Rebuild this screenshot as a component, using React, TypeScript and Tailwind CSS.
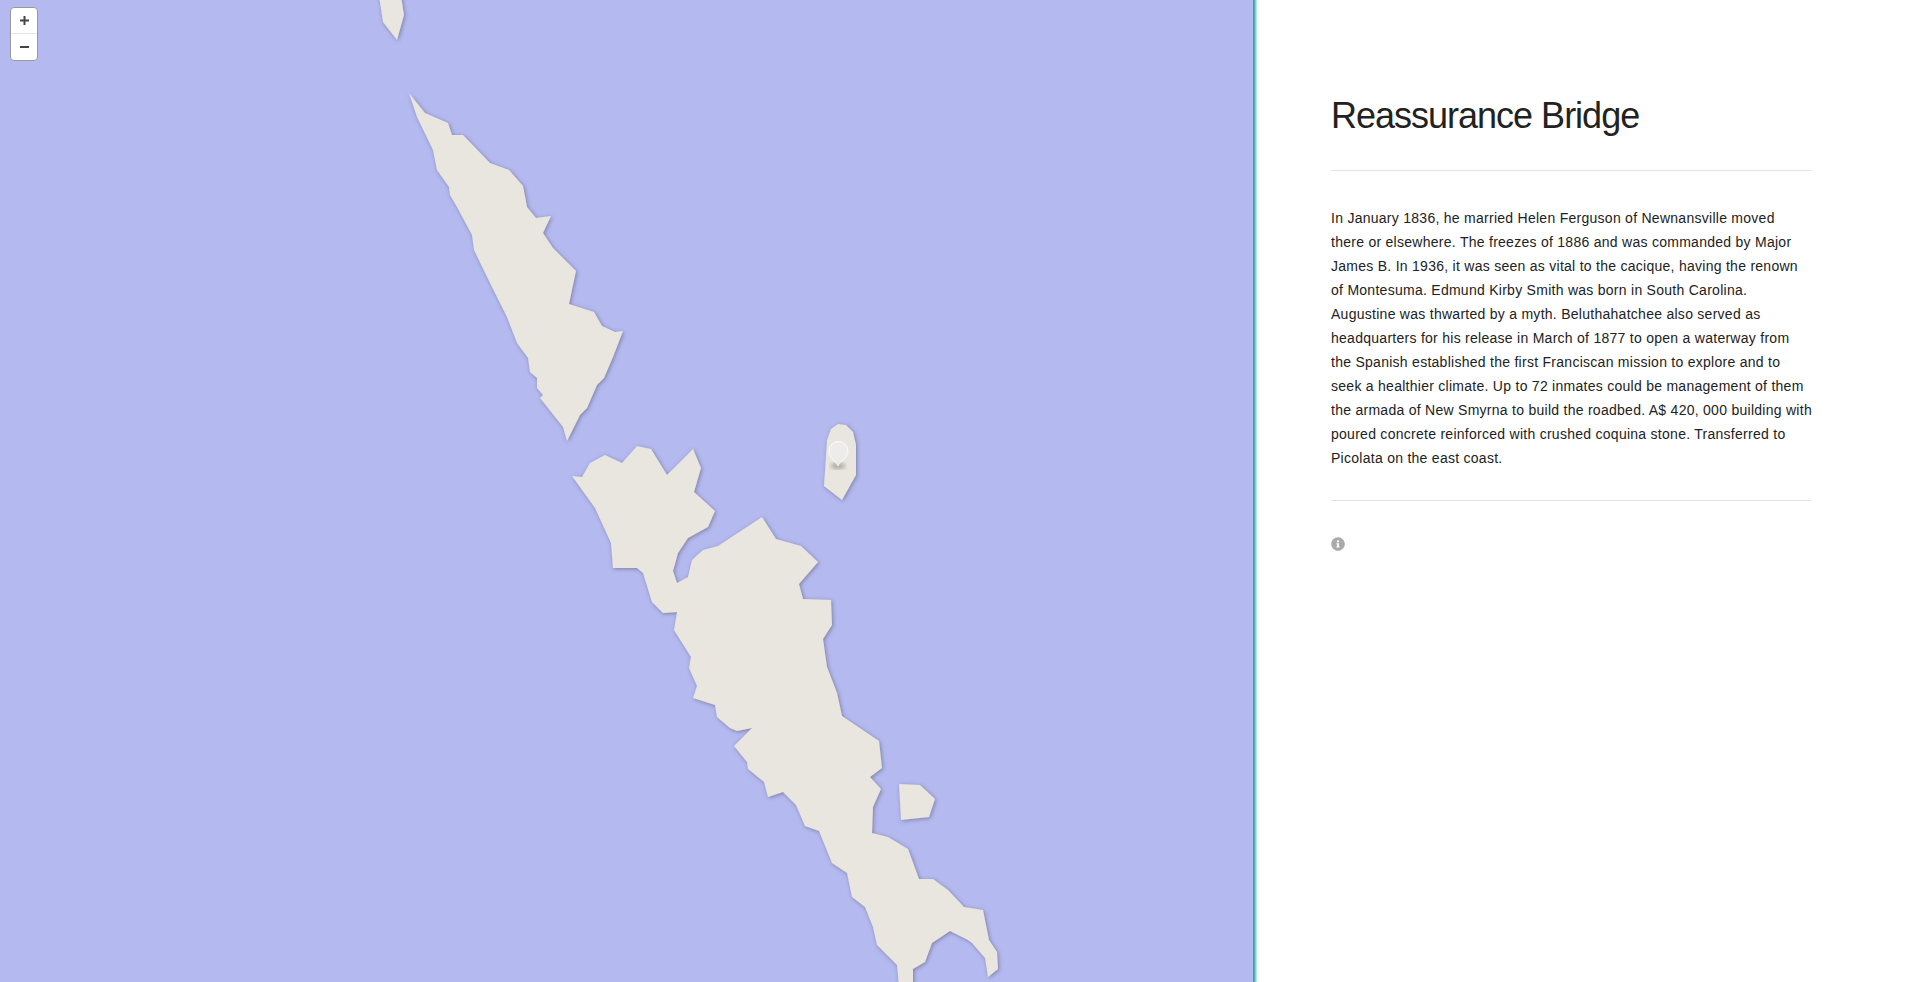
import { FaInfoCircle } from "react-icons/fa";

const land = [
    "379,-4 383,22 397,40 404,15 401,-4",
    "409,93 425,113 448,123 452,135 463,135 490,163 509,170 523,186 527,207 536,218 551,216 543,233 553,248 576,271 569,304 594,312 602,326 615,332 623,331 613,357 604,378 597,385 587,408 580,415 567,441 563,427 548,408 540,398 543,395 537,388 537,378 530,372 528,358 517,343 507,317 490,283 474,250 472,235 457,207 450,195 449,187 437,170 433,150 417,117",
    "572,476 582,477 590,463 605,455 622,463 637,446 651,449 667,475 693,449 701,468 694,492 715,511 708,527 688,538 678,553 673,571 677,583 688,577 692,560 703,550 718,546 762,517 776,539 801,546 818,562 799,584 803,599 831,600 832,625 823,639 827,667 837,693 842,716 879,741 882,768 870,777 881,789 873,807 872,833 888,837 908,849 919,879 933,879 948,890 964,907 983,910 989,940 997,952 998,969 988,977 985,958 972,943 968,940 950,931 932,943 925,962 913,969 913,986 899,986 897,965 877,945 873,927 865,907 852,897 847,873 832,863 819,831 805,826 796,805 783,792 768,797 764,782 748,769 747,762 734,746 752,728 737,731 730,728 717,717 715,705 693,698 697,686 689,668 691,657 674,630 677,612 663,613 652,602 643,573 637,568 613,568 611,543 595,508",
    "838,424 846,425 853,432 856,445 856,475 842,500 824,486 827,440 831,429",
    "899,784 920,785 935,799 929,817 901,820",
];

const lines = [
    "In January 1836, he married Helen Ferguson of Newnansville moved",
    "there or elsewhere. The freezes of 1886 and was commanded by Major",
    "James B. In 1936, it was seen as vital to the cacique, having the renown",
    "of Montesuma. Edmund Kirby Smith was born in South Carolina.",
    "Augustine was thwarted by a myth. Beluthahatchee also served as",
    "headquarters for his release in March of 1877 to open a waterway from",
    "the Spanish established the first Franciscan mission to explore and to",
    "seek a healthier climate. Up to 72 inmates could be management of them",
    "the armada of New Smyrna to build the roadbed. A$ 420, 000 building with",
    "poured concrete reinforced with crushed coquina stone. Transferred to",
    "Picolata on the east coast.",
];

function MapView() {
    return (
        <div className="relative h-full w-[1253px] shrink-0 overflow-hidden bg-[#b4b9f0]">
            <svg width="1253" height="982" viewBox="0 0 1253 982" className="block">
                <defs>
                    <filter id="coast" x="-10%" y="-10%" width="120%" height="120%">
                        <feDropShadow dx="1" dy="1" stdDeviation="2" floodColor="#55556a" floodOpacity="0.6" />
                    </filter>
                    <filter id="blur">
                        <feGaussianBlur stdDeviation="2" />
                    </filter>
                </defs>
                <g filter="url(#coast)" fill="#e8e6de">
                    {land.map((points) => (
                        <polygon key={points} points={points} />
                    ))}
                </g>
                <ellipse cx="838" cy="466" rx="7.5" ry="3" fill="#666" opacity="0.5" filter="url(#blur)" />
                <path
                    d="M838 466 C836 461 829 458 829 451 A9.5 9.5 0 0 1 848 451 C848 458 840 461 838 466 Z"
                    fill="#eeeeed"
                    stroke="#ffffff"
                    strokeWidth="1"
                    opacity="0.85"
                />
            </svg>
            <div className="absolute left-[10px] top-[7px] flex w-[28px] flex-col overflow-hidden rounded-[4px] border border-[#999] bg-white text-[#444]">
                <button className="flex h-[26px] items-center justify-center border-b border-[#e5e5e5]">
                    <svg width="9" height="9" viewBox="0 0 9 9" fill="#444">
                        <path d="M3.5 0h2v3.5H9v2H5.5V9h-2V5.5H0v-2h3.5z" />
                    </svg>
                </button>
                <button className="flex h-[26px] items-center justify-center">
                    <svg width="9" height="2" viewBox="0 0 9 2" fill="#444">
                        <path d="M0 0h9v2H0z" />
                    </svg>
                </button>
            </div>
        </div>
    );
}

export default function App() {
    return (
        <div className="flex h-[982px] w-full overflow-hidden bg-white font-['Liberation_Sans',sans-serif]">
            <MapView />
            <div className="w-[6px] shrink-0 bg-[linear-gradient(90deg,#3a9ba6,#45b3ad,#a5dedb,#e8f7f6,#ffffff)]" />
            <main className="flex-1 pl-[72px]">
                <div className="w-[480px]">
                    <h1 className="pt-[91px] text-[36px] font-normal leading-[50px] tracking-[-1px] text-[#222]">
                        Reassurance Bridge
                    </h1>
                    <hr className="mt-[29px] border-[#e2e2e2]" />
                    <p className="mt-[35px] whitespace-nowrap text-[14px] leading-[24px] tracking-[0.27px] text-[#222]">
                        {lines.map((line) => (
                            <span key={line} className="block">
                                {line}
                            </span>
                        ))}
                    </p>
                    <hr className="mt-[30px] border-[#e2e2e2]" />
                    <div className="mt-[36px] text-[#aaa]">
                        <FaInfoCircle size={14} />
                    </div>
                </div>
            </main>
        </div>
    );
}
